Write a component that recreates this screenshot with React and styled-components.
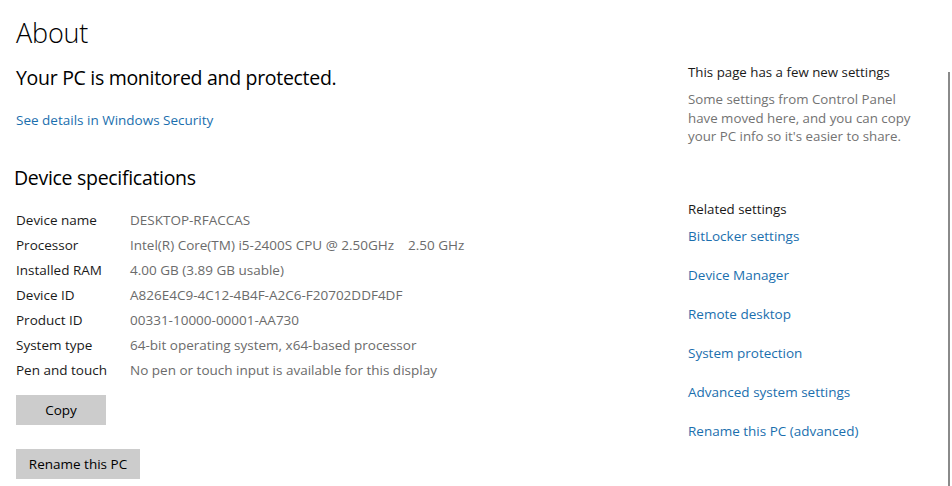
import React from "react";
import styled, { createGlobalStyle } from "styled-components";

const Global = createGlobalStyle`
  html, body { margin: 0; padding: 0; background: #fff; }
  body { font-family: "Open Sans", "Noto Sans", sans-serif; color: #000; overflow: hidden; }
`;

const Page = styled.div`
  width: 952px;
  height: 486px;
  display: flex;
  position: relative;
  box-sizing: border-box;
`;

const Main = styled.div`
  width: 672px;
  padding: 14px 0 0 16px;
  box-sizing: border-box;
  display: flex;
  flex-direction: column;
`;

const Title = styled.h1`
  margin: 0;
  font-size: 27px;
  font-weight: 300;
  line-height: 38px;
  letter-spacing: -0.2px;
`;

const Status = styled.div`
  margin-top: 13px;
  font-size: 19.5px;
  line-height: 26px;
  letter-spacing: -0.3px;
`;

const Link = styled.a`
  display: block;
  color: #1b6fae;
  font-size: 13.5px;
  line-height: 18px;
  text-decoration: none;
`;

const SecLink = styled(Link)`
  margin-top: 20px;
`;

const SubTitle = styled.h2`
  margin: 36px 0 0 -2px;
  font-size: 19.5px;
  font-weight: 400;
  line-height: 26px;
  letter-spacing: -0.3px;
`;

const Specs = styled.div`
  margin-top: 16px;
  display: grid;
  grid-template-columns: 114px auto;
  grid-auto-rows: 25px;
  align-items: center;
  font-size: 13.5px;
`;

const Label = styled.div`
  color: #1a1a1a;
`;

const Value = styled.div`
  color: #6b6b6b;
  white-space: pre;
`;

const Button = styled.button`
  display: block;
  height: 30px;
  width: ${(p) => p.$w}px;
  margin-top: ${(p) => p.$mt}px;
  border: none;
  background: #cccccc;
  font-family: inherit;
  font-size: 13.5px;
  color: #000;
  padding: 0;
`;

const Side = styled.div`
  padding: 63px 0 0 16px;
  width: 264px;
  box-sizing: border-box;
  display: flex;
  flex-direction: column;
`;

const SideHead = styled.div`
  font-size: 13.3px;
  line-height: 18px;
  color: #1a1a1a;
`;

const SideText = styled.div`
  margin-top: 9px;
  font-size: 13.3px;
  line-height: 18.5px;
  color: #737373;
  white-space: nowrap;
`;

const Related = styled(SideHead)`
  margin-top: 54px;
`;

const Links = styled.div`
  margin-top: 9px;
  display: flex;
  flex-direction: column;
  gap: 21px;
`;

const Scrollbar = styled.div`
  position: absolute;
  right: 2px;
  top: 72px;
  bottom: 0;
  width: 2px;
  background: #8a8a8a;
`;

const specs = [
  ["Device name", "DESKTOP-RFACCAS"],
  ["Processor", "Intel(R) Core(TM) i5-2400S CPU @ 2.50GHz    2.50 GHz"],
  ["Installed RAM", "4.00 GB (3.89 GB usable)"],
  ["Device ID", "A826E4C9-4C12-4B4F-A2C6-F20702DDF4DF"],
  ["Product ID", "00331-10000-00001-AA730"],
  ["System type", "64-bit operating system, x64-based processor"],
  ["Pen and touch", "No pen or touch input is available for this display"],
];

const related = [
  "BitLocker settings",
  "Device Manager",
  "Remote desktop",
  "System protection",
  "Advanced system settings",
  "Rename this PC (advanced)",
];

export default function App() {
  return (
    <>
      <Global />
      <Page>
        <Main>
          <Title>About</Title>
          <Status>Your PC is monitored and protected.</Status>
          <SecLink href="#">See details in Windows Security</SecLink>
          <SubTitle>Device specifications</SubTitle>
          <Specs>
            {specs.map(([l, v]) => (
              <React.Fragment key={l}>
                <Label>{l}</Label>
                <Value>{v}</Value>
              </React.Fragment>
            ))}
          </Specs>
          <Button $w={90} $mt={13}>Copy</Button>
          <Button $w={124} $mt={24}>Rename this PC</Button>
        </Main>
        <Side>
          <SideHead>This page has a few new settings</SideHead>
          <SideText>
            Some settings from Control Panel
            <br />
            have moved here, and you can copy
            <br />
            your PC info so it's easier to share.
          </SideText>
          <Related>Related settings</Related>
          <Links>
            {related.map((r) => (
              <Link key={r} href="#">{r}</Link>
            ))}
          </Links>
        </Side>
        <Scrollbar />
      </Page>
    </>
  );
}
